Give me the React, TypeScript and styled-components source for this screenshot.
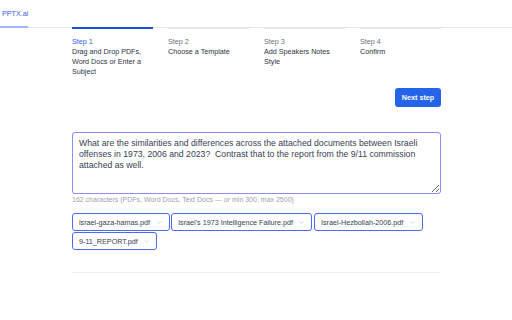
import { createGlobalStyle } from "styled-components";
import styled from "styled-components";
import { ChevronDown } from "lucide-react";

const GlobalStyle = createGlobalStyle`
  body {
    margin: 0;
    background: #ffffff;
    font-family: "Liberation Sans", Arial, sans-serif;
    -webkit-font-smoothing: antialiased;
  }
`;

const steps = [
  { label: "Step 1", text: "Drag and Drop PDFs, Word Docs or Enter a Subject" },
  { label: "Step 2", text: "Choose a Template" },
  { label: "Step 3", text: "Add Speakers Notes Style" },
  { label: "Step 4", text: "Confirm" },
];

const files = [
  "israel-gaza-hamas.pdf",
  "Israel's 1973 Intelligence Failure.pdf",
  "Israel-Hezbollah-2006.pdf",
  "9-11_REPORT.pdf",
];

const prompt =
  "What are the similarities and differences across the attached documents between Israeli offenses in 1973, 2006 and 2023?  Contrast that to the report from the 9/11 commission attached as well.";

export default function App() {
  return (
    <>
      <GlobalStyle />
      <Header>
        <LogoTab>PPTX.ai</LogoTab>
      </Header>
      <Main>
        <Steps>
          {steps.map((s, i) => (
            <StepItem key={s.label} active={i === 0}>
              <StepLabel active={i === 0}>{s.label}</StepLabel>
              <StepText>{s.text}</StepText>
            </StepItem>
          ))}
        </Steps>
        <ButtonRow>
          <NextButton type="button">Next step</NextButton>
        </ButtonRow>
        <PromptArea defaultValue={prompt} />
        <Hint>162 characters (PDFs, Word Docs, Text Docs --- or min 300, max 2500)</Hint>
        <FileList>
          {files.map((f) => (
            <FileChip key={f} type="button">
              <span>{f}</span>
              <ChevronDown size={7} strokeWidth={1.5} />
            </FileChip>
          ))}
        </FileList>
        <Divider />
      </Main>
    </>
  );
}

// --------------------------------------------------------

const Header = styled.header`
  display: flex;
  height: 27px;
  border-bottom: 1px solid #e5e7eb;
`;

const LogoTab = styled.div`
  display: flex;
  align-items: center;
  width: 28px;
  padding-left: 2px;
  box-sizing: border-box;
  font-size: 7.2px;
  color: #3b63e8;
  border-bottom: 2px solid #a5b4fc;
  margin-bottom: -1px;
  white-space: nowrap;
`;

const Main = styled.main`
  width: 369px;
  margin: -1px 0 0 72px;
`;

const Steps = styled.div`
  display: grid;
  grid-template-columns: repeat(4, 81px);
  column-gap: 15px;
`;

const StepItem = styled.div<{ active?: boolean }>`
  border-top: 2px solid ${(p) => (p.active ? "#1d4ed8" : "#e5e7eb")};
  padding-top: 8px;
`;

const StepLabel = styled.div<{ active?: boolean }>`
  font-size: 7.2px;
  line-height: 10px;
  color: ${(p) => (p.active ? "#2563eb" : "#6b7280")};
`;

const StepText = styled.div`
  font-size: 7.2px;
  line-height: 10px;
  color: #2b3441;
`;

const ButtonRow = styled.div`
  display: flex;
  justify-content: flex-end;
  margin-top: 11px;
`;

const NextButton = styled.button`
  width: 46px;
  height: 19px;
  padding: 0;
  border: none;
  border-radius: 3px;
  background: #2563eb;
  color: #ffffff;
  font-family: "Liberation Sans", Arial, sans-serif;
  font-size: 7.2px;
  font-weight: 700;
`;

const PromptArea = styled.textarea`
  display: block;
  box-sizing: border-box;
  width: 369px;
  height: 62px;
  margin-top: 25px;
  padding: 5px 6px;
  border: 1.5px solid #8b8cf6;
  border-radius: 3px;
  outline: none;
  resize: vertical;
  font-family: "Liberation Sans", Arial, sans-serif;
  font-size: 8.7px;
  line-height: 11px;
  color: #374151;
`;

const Hint = styled.div`
  margin-top: 1px;
  font-size: 7px;
  line-height: 10px;
  color: #9ca3af;
`;

const FileList = styled.div`
  display: flex;
  flex-wrap: wrap;
  gap: 1px 1.5px;
  margin-top: 8px;
`;

const FileChip = styled.button`
  display: flex;
  align-items: center;
  gap: 5.5px;
  height: 18px;
  padding: 0 6px;
  background: #ffffff;
  border: 1.5px solid #4b6cf0;
  border-radius: 3px;
  font-family: "Liberation Sans", Arial, sans-serif;
  font-size: 7.2px;
  color: #374151;

  svg {
    color: #a3a9b3;
  }
`;

const Divider = styled.hr`
  margin: 22px 0 0;
  border: none;
  border-top: 1px solid #eeeff2;
`;
